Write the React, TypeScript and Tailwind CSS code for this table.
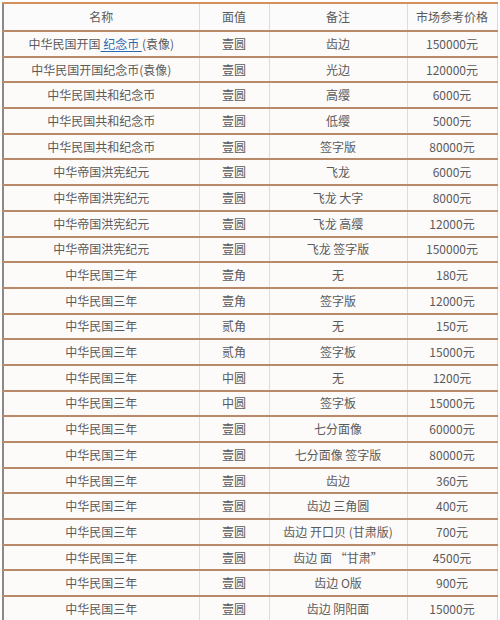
import React from "react";

type Row = [React.ReactNode, string, string, string];

const rows: Row[] = [
  [
    <>
      中华民国开国
      <span className="text-[#2a6cb4] underline underline-offset-2"> 纪念币 </span>
      (袁像)
    </>,
    "壹圆",
    "齿边",
    "150000元",
  ],
  ["中华民国开国纪念币(袁像)", "壹圆", "光边", "120000元"],
  ["中华民国共和纪念币", "壹圆", "高缨", "6000元"],
  ["中华民国共和纪念币", "壹圆", "低缨", "5000元"],
  ["中华民国共和纪念币", "壹圆", "签字版", "80000元"],
  ["中华帝国洪宪纪元", "壹圆", "飞龙", "6000元"],
  ["中华帝国洪宪纪元", "壹圆", "飞龙 大字", "8000元"],
  ["中华帝国洪宪纪元", "壹圆", "飞龙 高缨", "12000元"],
  ["中华帝国洪宪纪元", "壹圆", "飞龙 签字版", "150000元"],
  ["中华民国三年", "壹角", "无", "180元"],
  ["中华民国三年", "壹角", "签字版", "12000元"],
  ["中华民国三年", "贰角", "无", "150元"],
  ["中华民国三年", "贰角", "签字板", "15000元"],
  ["中华民国三年", "中圆", "无", "1200元"],
  ["中华民国三年", "中圆", "签字板", "15000元"],
  ["中华民国三年", "壹圆", "七分面像", "60000元"],
  ["中华民国三年", "壹圆", "七分面像 签字版", "80000元"],
  ["中华民国三年", "壹圆", "齿边", "360元"],
  ["中华民国三年", "壹圆", "齿边 三角圆", "400元"],
  ["中华民国三年", "壹圆", "齿边 开口贝 (甘肃版)", "700元"],
  ["中华民国三年", "壹圆", "齿边 面 “甘肃”", "4500元"],
  ["中华民国三年", "壹圆", "齿边 O版", "900元"],
  ["中华民国三年", "壹圆", "齿边 阴阳面", "15000元"],
];

const cell = "border-r border-[#dcdcdc] text-center align-middle px-1 leading-none";

export default function App() {
  return (
    <div
      className="w-[500px] h-[620px] overflow-hidden bg-white pt-[2px] pl-[2px]"
      style={{ fontFamily: '"Microsoft YaHei", "Noto Sans CJK SC", sans-serif' }}
    >
      <table className="w-[494px] border-collapse text-[12px] text-[#5a5a5a] table-fixed border-l-2 border-l-[#8a8a8a]">
        <colgroup>
          <col className="w-[196px]" />
          <col className="w-[70px]" />
          <col className="w-[138px]" />
          <col className="w-[90px]" />
        </colgroup>
        <thead>
          <tr className="h-[28px] border-t-2 border-t-[#d4905a] border-b-2 border-b-[#b88a6a] bg-[#fbfbfb]">
            <th className={cell + " font-normal"}>名称</th>
            <th className={cell + " font-normal"}>面值</th>
            <th className={cell + " font-normal"}>备注</th>
            <th className={cell + " font-normal"}>市场参考价格</th>
          </tr>
        </thead>
        <tbody>
          {rows.map((r, i) => (
            <tr key={i} className="h-[25.7px] border-b-2 border-b-[#b88a6a] bg-[#fdfbfa]">
              <td className={cell}>{r[0]}</td>
              <td className={cell}>{r[1]}</td>
              <td className={cell}>{r[2]}</td>
              <td className={cell}>{r[3]}</td>
            </tr>
          ))}
        </tbody>
      </table>
    </div>
  );
}
